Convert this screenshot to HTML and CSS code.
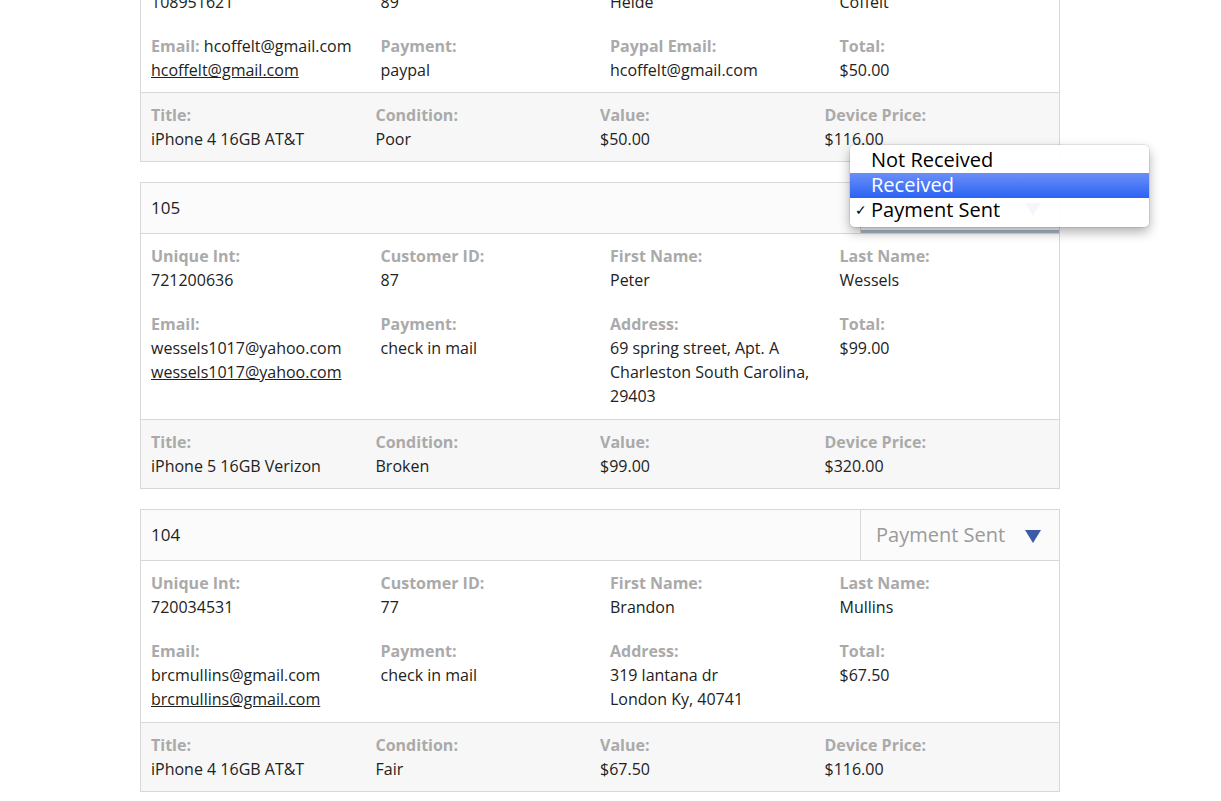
FILE: index.html
```html
<!DOCTYPE html>
<html>
<head>
<meta charset="utf-8">
<title>Orders</title>
<link rel="stylesheet" href="styles.css">
</head>
<body>
<div class="list">

  <div class="order">
    <div class="order-head">
      <span class="order-num">106</span>
      <div class="status">
        <span class="status-text">Payment Sent</span>
        <svg class="caret" width="16" height="13" viewBox="0 0 16 13"><polygon points="0,0 16,0 8,13" /></svg>
      </div>
    </div>
    <div class="order-main">
      <div class="field"><div class="label">Unique Int:</div>108951621</div>
      <div class="field"><div class="label">Customer ID:</div>89</div>
      <div class="field"><div class="label">First Name:</div>Heide</div>
      <div class="field"><div class="label">Last Name:</div>Coffelt</div>
      <div class="field nowrap"><span class="label">Email:</span> hcoffelt@gmail.com<br><a class="mail" href="#">hcoffelt@gmail.com</a></div>
      <div class="field"><div class="label">Payment:</div>paypal</div>
      <div class="field"><div class="label">Paypal Email:</div>hcoffelt@gmail.com</div>
      <div class="field"><div class="label">Total:</div>$50.00</div>
    </div>
    <div class="order-device">
      <div class="field-d"><div class="label">Title:</div>iPhone 4 16GB AT&amp;T</div>
      <div class="field-d"><div class="label">Condition:</div>Poor</div>
      <div class="field-d"><div class="label">Value:</div>$50.00</div>
      <div class="field-d"><div class="label">Device Price:</div>$116.00</div>
    </div>
  </div>

  <div class="order">
    <div class="order-head">
      <span class="order-num">105</span>
      <div class="status focused">
        <span class="status-text">Payment Sent</span>
        <svg class="caret" width="16" height="13" viewBox="0 0 16 13"><polygon points="0,0 16,0 8,13" /></svg>
        <div class="menu">
          <div class="menu-item">Not Received</div>
          <div class="menu-item active">Received</div>
          <div class="menu-item"><span class="check">✓</span>Payment Sent</div>
        </div>
      </div>
    </div>
    <div class="order-main tall">
      <div class="field"><div class="label">Unique Int:</div>721200636</div>
      <div class="field"><div class="label">Customer ID:</div>87</div>
      <div class="field"><div class="label">First Name:</div>Peter</div>
      <div class="field"><div class="label">Last Name:</div>Wessels</div>
      <div class="field"><div class="label">Email:</div>wessels1017@yahoo.com<br><a class="mail" href="#">wessels1017@yahoo.com</a></div>
      <div class="field"><div class="label">Payment:</div>check in mail</div>
      <div class="field"><div class="label">Address:</div>69 spring street, Apt. A<br>Charleston South Carolina,<br>29403</div>
      <div class="field"><div class="label">Total:</div>$99.00</div>
    </div>
    <div class="order-device">
      <div class="field-d"><div class="label">Title:</div>iPhone 5 16GB Verizon</div>
      <div class="field-d"><div class="label">Condition:</div>Broken</div>
      <div class="field-d"><div class="label">Value:</div>$99.00</div>
      <div class="field-d"><div class="label">Device Price:</div>$320.00</div>
    </div>
  </div>

  <div class="order">
    <div class="order-head">
      <span class="order-num">104</span>
      <div class="status">
        <span class="status-text">Payment Sent</span>
        <svg class="caret" width="16" height="13" viewBox="0 0 16 13"><polygon points="0,0 16,0 8,13" /></svg>
      </div>
    </div>
    <div class="order-main tall">
      <div class="field"><div class="label">Unique Int:</div>720034531</div>
      <div class="field"><div class="label">Customer ID:</div>77</div>
      <div class="field"><div class="label">First Name:</div>Brandon</div>
      <div class="field"><div class="label">Last Name:</div>Mullins</div>
      <div class="field"><div class="label">Email:</div>brcmullins@gmail.com<br><a class="mail" href="#">brcmullins@gmail.com</a></div>
      <div class="field"><div class="label">Payment:</div>check in mail</div>
      <div class="field"><div class="label">Address:</div>319 lantana dr<br>London Ky, 40741</div>
      <div class="field"><div class="label">Total:</div>$67.50</div>
    </div>
    <div class="order-device">
      <div class="field-d"><div class="label">Title:</div>iPhone 4 16GB AT&amp;T</div>
      <div class="field-d"><div class="label">Condition:</div>Fair</div>
      <div class="field-d"><div class="label">Value:</div>$67.50</div>
      <div class="field-d"><div class="label">Device Price:</div>$116.00</div>
    </div>
  </div>

</div>
</body>
</html>
```

FILE: styles.css
```css
html, body {
  margin: 0;
  padding: 0;
  background: #ffffff;
}

body {
  font-family: "Open Sans", "Liberation Sans", sans-serif;
  font-size: 16px;
  line-height: 24px;
  color: #222222;
  overflow: hidden;
}

.list {
  width: 920px;
  margin-left: 140px;
  margin-top: -96px;
}

.order {
  border: 1px solid #d8d8d8;
  margin-bottom: 20px;
  background: #ffffff;
}

.order-head {
  display: flex;
  height: 50px;
  background: #fbfbfb;
  border-bottom: 1px solid #d8d8d8;
}

.order-num {
  flex: 1;
  padding-left: 10px;
  font-size: 17px;
  line-height: 50px;
  color: #1e1e1e;
}

.status {
  position: relative;
  width: 199px;
  border-left: 1px solid #d8d8d8;
  display: flex;
  align-items: center;
  padding-left: 16px;
  padding-right: 18px;
  box-sizing: border-box;
}

.status.focused {
  box-shadow: inset 0 -3px 0 #a9b6c8;
}

.status-text {
  flex: 1;
  font-size: 20px;
  color: #9a9a9a;
  margin-left: -1px;
}

.status.focused .status-text {
  visibility: hidden;
}

.caret {
  display: block;
  fill: #3b5ba7;
  margin-top: 3px;
}

.menu {
  position: absolute;
  left: -11px;
  top: -38px;
  width: 299px;
  padding: 3px 0 4px;
  background: rgba(255, 255, 255, 0.95);
  border-radius: 5px;
  box-shadow: 0 0 0 1px rgba(0, 0, 0, 0.08), 0 5px 12px rgba(0, 0, 0, 0.32);
  z-index: 10;
}

.menu-item {
  position: relative;
  height: 25px;
  line-height: 24px;
  padding-left: 21px;
  font-size: 20px;
  color: #000000;
}

.menu-item.active {
  background: linear-gradient(#6b8ff8, #2b63f3);
  color: #ffffff;
}

.check {
  position: absolute;
  left: 5px;
  top: 0;
  font-size: 14px;
}

.order-main {
  display: grid;
  grid-template-columns: repeat(4, 1fr);
  row-gap: 20px;
  padding: 10px 0;
}

.order-main.tall {
  padding-bottom: 11px;
}

.field {
  padding-left: 10px;
}

.nowrap {
  white-space: nowrap;
}

.order-device {
  display: grid;
  grid-template-columns: repeat(4, 1fr);
  padding: 10px;
  background: #f7f7f7;
  border-top: 1px solid #d8d8d8;
}

.label {
  font-weight: 700;
  color: #aaaaaa;
}

.mail {
  color: #222222;
  text-decoration: underline;
}
```
